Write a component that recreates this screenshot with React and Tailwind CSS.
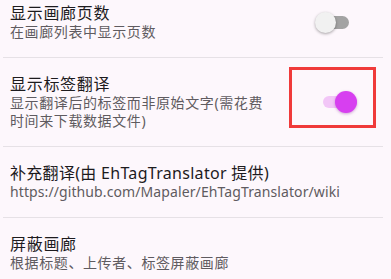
import React from 'react';

const font = { fontFamily: '"Noto Sans", "Noto Sans CJK SC", sans-serif' };

// Material-style switch: track and thumb overlap via negative margin
const Switch = ({ on, className = '' }) =>
  on ? (
    <div className={`flex items-center ${className}`}>
      <div className="h-[12px] w-[34px] rounded-full bg-[#f2c6f7]" />
      <div className="-ml-[22px] h-[22px] w-[22px] rounded-full bg-[#d73ff0] shadow-[0_1px_3px_rgba(120,0,140,0.35)]" />
    </div>
  ) : (
    <div className={`flex items-center ${className}`}>
      <div className="z-10 h-[21px] w-[21px] rounded-full bg-[#f1f1f1] shadow-[0_1px_3px_rgba(0,0,0,0.35)]" />
      <div className="-ml-[19px] h-[13px] w-[32px] rounded-full bg-[#a3a3a3]" />
    </div>
  );

const Row = ({ title, lines, children, last, latin }) => (
  <div className={`ml-[3px] mr-[8px] flex items-center py-[16px] ${last ? '' : 'border-b border-[#e6e1e6]'}`}>
    <div className="flex-1 pl-[7px]">
      <div className={`text-[16px] leading-[20px] text-[#1d1b1e] ${latin ? 'tracking-[0.3px]' : 'tracking-[0.7px]'}`}>
        {title}
      </div>
      {lines.map((l, i) => (
        <div
          key={i}
          className={`text-[14px] leading-[18px] text-[#5f5b60] ${latin ? 'tracking-[0.1px]' : 'tracking-[0.6px]'}`}
        >
          {l}
        </div>
      ))}
    </div>
    {children}
  </div>
);

export default function App() {
  return (
    <div className="relative h-[279px] w-[391px] overflow-hidden bg-[#fdf7fc]" style={font}>
      <div className="-mt-[13px] flex flex-col">
        <Row title="显示画廊页数" lines={['在画廊列表中显示页数']}>
          <Switch on={false} className="mr-[34px]" />
        </Row>
        <Row title="显示标签翻译" lines={['显示翻译后的标签而非原始文字(需花费', '时间来下载数据文件)']}>
          <Switch on className="mr-[26px]" />
        </Row>
        <Row
          latin
          title="补充翻译(由 EhTagTranslator 提供)"
          lines={['https://github.com/Mapaler/EhTagTranslator/wiki']}
        />
        <Row title="屏蔽画廊" lines={['根据标题、上传者、标签屏蔽画廊']} last />
      </div>
      <div className="pointer-events-none absolute left-[289px] top-[67px] h-[61px] w-[87px] border-[3px] border-[#f03a3a]" />
    </div>
  );
}
